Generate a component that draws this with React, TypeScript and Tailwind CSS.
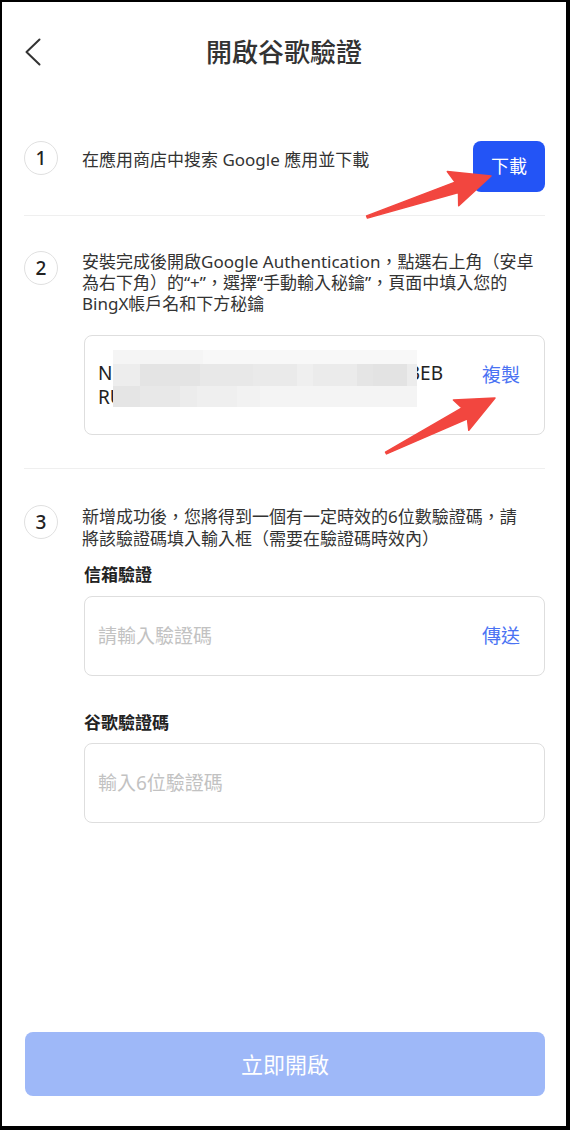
import React from 'react';

const StepNum: React.FC<{ n: number }> = ({ n }) => (
  <div className="w-[34px] h-[34px] shrink-0 rounded-full border-[1.5px] border-[#e0e0e0] flex items-center justify-center text-[19px] font-medium text-[#222]">
    {n}
  </div>
);

// pixelated blur over the secret key
const mosaic: [number, number, number, number, string][] = [
  [0, 0, 90, 14, '#f5f5f5'],
  [90, 0, 214, 14, '#f8f8f8'],
  [0, 14, 27, 22, '#ededed'],
  [27, 14, 60, 22, '#e4e4e4'],
  [87, 14, 53, 22, '#e8e8e8'],
  [140, 14, 44, 22, '#eaeaea'],
  [184, 14, 16, 22, '#efefef'],
  [200, 14, 44, 22, '#ebebeb'],
  [244, 14, 16, 22, '#e5e5e5'],
  [260, 14, 34, 22, '#e3e3e3'],
  [294, 14, 10, 22, '#ececec'],
  [0, 36, 27, 21, '#e5e5e5'],
  [27, 36, 40, 21, '#e8e8e8'],
  [67, 36, 17, 21, '#ececec'],
  [84, 36, 40, 21, '#efefef'],
  [124, 36, 23, 21, '#f2f2f2'],
  [147, 36, 157, 21, '#f4f4f4'],
];

const App: React.FC = () => {
  return (
    <div className="relative w-[570px] h-[1130px] border-black border-t-2 border-l-2 border-r-4 border-b-4 bg-white flex flex-col font-['Noto_Sans','Noto_Sans_CJK_TC',sans-serif] text-[#333]">
      {/* header */}
      <div className="h-[100px] shrink-0 grid grid-cols-[1fr_auto_1fr] items-center">
        <div className="pl-[23px]">
          <svg width="16" height="28" viewBox="0 0 16 28" fill="none">
            <path d="M14.5 1.5 L1.5 14 L14.5 26.5" stroke="#333" strokeWidth="2" strokeLinecap="round" strokeLinejoin="round" />
          </svg>
        </div>
        <h1 className="text-[26px] font-medium leading-none text-[#333]">開啟谷歌驗證</h1>
        <div />
      </div>

      <div className="pl-[22px] pr-[21px]">
        {/* step 1 */}
        <div className="flex items-start pt-[39px] pb-[23px] border-b border-[#efefef]">
          <StepNum n={1} />
          <p className="ml-[24px] mt-[8px] text-[17px] leading-[21px]">在應用商店中搜索 Google 應用並下載</p>
          <button className="ml-auto w-[72px] h-[51px] rounded-[8px] bg-[#2354f6] text-white text-[18px]">下載</button>
        </div>

        {/* step 2 */}
        <div className="flex items-start pt-[35px] pb-[33px] border-b border-[#efefef]">
          <StepNum n={2} />
          <div className="ml-[24px] flex-1">
            <p className="text-[17px] leading-[21px] whitespace-nowrap">
              安裝完成後開啟Google Authentication，點選右上角（安卓
              <br />
              為右下角）的“+”，選擇“手動輸入秘鑰”，頁面中填入您的
              <br />
              BingX帳戶名和下方秘鑰
            </p>
            <div className="mt-[21px] ml-[2px] h-[100px] rounded-[8px] border-[1.5px] border-[#dedede] flex items-center pl-[13px] pr-[24px]">
              <div className="relative text-[19px] leading-[24px] text-[#222]">
                <div className="flex justify-between w-[345px]">
                  <span>NH</span>
                  <span>3EB</span>
                </div>
                <div>RU7K</div>
                <svg className="absolute left-[15px] top-[-11px]" width="304" height="57" viewBox="0 0 304 57">
                  {mosaic.map(([x, y, w, h, c], i) => (
                    <rect key={i} x={x} y={y} width={w} height={h} fill={c} />
                  ))}
                </svg>
              </div>
              <span className="ml-auto mb-[20px] text-[19px] text-[#4a72f3]">複製</span>
            </div>
          </div>
        </div>

        {/* step 3 */}
        <div className="flex items-start pt-[36px]">
          <StepNum n={3} />
          <div className="ml-[24px] flex-1">
            <p className="mt-[1px] text-[17px] leading-[22px] whitespace-nowrap">
              新增成功後，您將得到一個有一定時效的6位數驗證碼，請
              <br />
              將該驗證碼填入輸入框（需要在驗證碼時效內）
            </p>
            <div className="mt-[13px] ml-[2px] text-[17px] leading-[24px] font-bold text-[#222]">信箱驗證</div>
            <div className="mt-[9px] ml-[2px] h-[80px] rounded-[8px] border-[1.5px] border-[#dedede] flex items-center pl-[13px] pr-[24px]">
              <input
                className="flex-1 outline-none text-[19px] text-[#222] placeholder:text-[#c2c2c2] bg-transparent"
                placeholder="請輸入驗證碼"
              />
              <span className="text-[19px] text-[#4a72f3]">傳送</span>
            </div>
            <div className="mt-[35px] ml-[2px] text-[17px] leading-[24px] font-bold text-[#222]">谷歌驗證碼</div>
            <div className="mt-[8px] ml-[2px] h-[80px] rounded-[8px] border-[1.5px] border-[#dedede] flex items-center pl-[13px] pr-[24px]">
              <input
                className="flex-1 outline-none text-[19px] text-[#222] placeholder:text-[#c2c2c2] bg-transparent"
                placeholder="輸入6位驗證碼"
              />
            </div>
          </div>
        </div>
      </div>

      {/* bottom action */}
      <div className="mt-auto pl-[23px] pr-[21px] mb-[30px]">
        <button className="w-full h-[64px] rounded-[8px] bg-[#9eb8f8] text-white text-[22px]">立即開啟</button>
      </div>

      {/* annotation arrows */}
      <svg className="absolute left-[-2px] top-[-2px] pointer-events-none" width="570" height="1130" viewBox="0 0 570 1130">
        <polygon
          points="366.6,215.9 455.1,182.1 447.3,171.5 491,176 458.7,205.7 458.5,192.5 367.4,218.1"
          fill="#f2463f"
          stroke="#f2463f"
          strokeWidth="1.5"
          strokeLinejoin="round"
        />
        <polygon
          points="385.5,452.1 462,407.9 453.4,399.9 495,398 468.8,430.3 467.4,418.7 386.5,453.9"
          fill="#f2463f"
          stroke="#f2463f"
          strokeWidth="1.5"
          strokeLinejoin="round"
        />
      </svg>
    </div>
  );
};

export default App;
